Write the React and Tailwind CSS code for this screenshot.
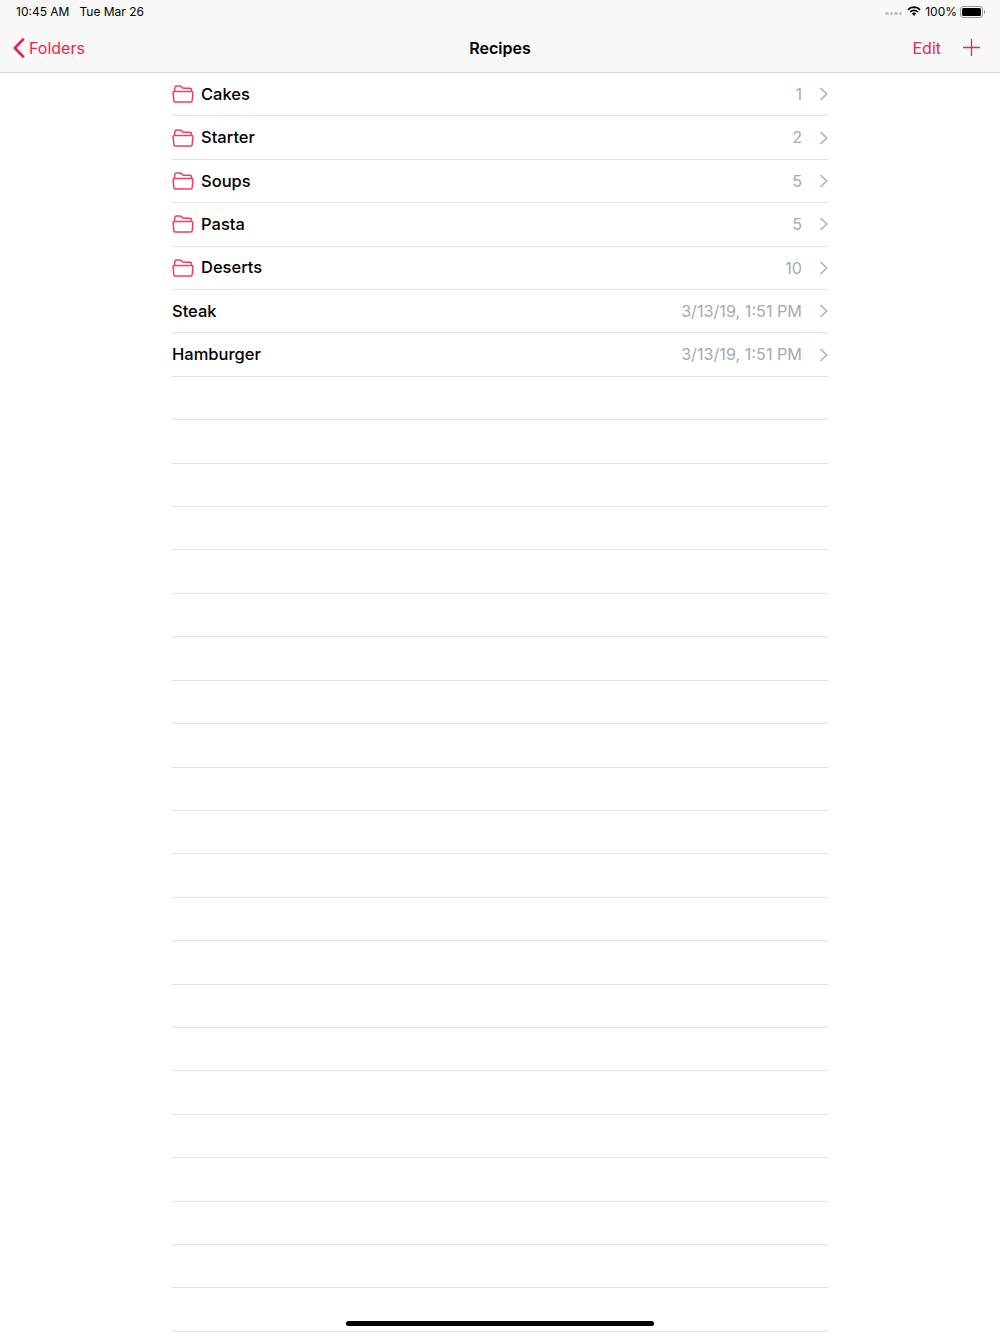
import React from 'react';

const items = [
  { name: 'Cakes', detail: '1', folder: true },
  { name: 'Starter', detail: '2', folder: true },
  { name: 'Soups', detail: '5', folder: true },
  { name: 'Pasta', detail: '5', folder: true },
  { name: 'Deserts', detail: '10', folder: true },
  { name: 'Steak', detail: '3/13/19, 1:51 PM' },
  { name: 'Hamburger', detail: '3/13/19, 1:51 PM' },
];

const emptyRows = Array.from({ length: 22 }, (_, i) => i);

const FolderIcon = () => (
  <svg width="22" height="18" viewBox="0 0 22 18" fill="none" stroke="#ee3f63" strokeWidth="1.5" strokeLinejoin="round" className="shrink-0">
    <path d="M2.500 6.500L2.900 2.400C3 1.500 3.600 1 4.500 1h3.400c.6 0 1 .2 1.400.6l1.200 1.200c.3.3.6.4 1 .4h6.400c1 0 1.600.6 1.600 1.600v1.700" />
    <path d="M1.100 7.900c-.1-.9.5-1.500 1.400-1.500h17c.9 0 1.500.6 1.400 1.500l-.7 7.600c-.1 1-.7 1.500-1.600 1.500H3.400c-.9 0-1.500-.5-1.600-1.500z" />
  </svg>
);

const Chevron = () => (
  <svg width="9" height="14" viewBox="0 0 9 14" fill="none" stroke="#b4b4b9" strokeWidth="1.7" className="shrink-0">
    <path d="M1.500 1l6.200 6-6.200 6" />
  </svg>
);

const StatusBar = () => (
  <div className="flex h-6 items-center justify-between pl-4 pr-[15px] text-[12px] leading-none text-black">
    <div className="flex gap-[10px]">
      <span>10:45 AM</span>
      <span>Tue Mar 26</span>
    </div>
    <div className="flex items-center">
      <div className="mt-[3px] flex gap-[1px]">
        {[0, 1, 2, 3].map((i) => (
          <span key={i} className="h-[3.5px] w-[3.5px] rounded-full bg-[#c4c4c4]" />
        ))}
      </div>
      <svg width="14" height="11" viewBox="0 0 14 11" className="ml-[5px] -mt-[1px]" fill="none" stroke="#000">
        <path d="M.900 3.800A8.700 8.700 0 0 1 7 1.200a8.700 8.700 0 0 1 6.100 2.600" strokeWidth="1.700" />
        <path d="M3.200 6A5.400 5.400 0 0 1 7 4.400 5.400 5.400 0 0 1 10.800 6" strokeWidth="1.700" />
        <path d="M7 6.500c-.9 0-1.600.3-2.100.9L7 10l2.100-2.600c-.5-.6-1.200-.9-2.100-.9z" fill="#000" stroke="none" />
      </svg>
      <span className="ml-[4px]">100%</span>
      <div className="ml-[3px] flex items-center">
        <div className="h-[12px] w-[23px] rounded-[3px] border border-[#9a9a9a] p-[1px]">
          <div className="h-full w-full rounded-[1.5px] bg-black" />
        </div>
        <div className="ml-[1px] h-[4px] w-[1px] rounded-r-sm bg-[#9a9a9a]" />
      </div>
    </div>
  </div>
);

const NavBar = () => (
  <div className="grid h-[48px] grid-cols-[1fr_auto_1fr] items-center text-[16px] text-[#e8264f]">
    <div className="flex items-center pl-[13px]">
      <svg width="12" height="20" viewBox="0 0 12 20" fill="none" stroke="#e8264f" strokeWidth="2.6" strokeLinecap="round" strokeLinejoin="round">
        <path d="M10 1.500L1.800 10 10 18.500" />
      </svg>
      <span className="ml-[4px]">Folders</span>
    </div>
    <span className="font-semibold text-black">Recipes</span>
    <div className="flex items-center justify-end pr-[20px]">
      <span>Edit</span>
      <svg width="17" height="17" viewBox="0 0 17 17" stroke="#e8264f" strokeWidth="1.3" className="ml-[22px] -mt-[1px]">
        <path d="M8.500 0v17M0 8.500h17" />
      </svg>
    </div>
  </div>
);

const App = () => (
  <div className="relative h-[1334px] overflow-hidden bg-white font-['Inter',sans-serif]">
    <div className="h-[73px] border-b border-[#d4d4d6] bg-[#f8f8f8]">
      <StatusBar />
      <NavBar />
    </div>
    <div className="mx-[172px]">
      {items.map((item) => (
        <div key={item.name} className="flex h-[43.41px] items-center border-b border-[#e2e2e4]">
          {item.folder && (
            <span className="mr-[7px] flex">
              <FolderIcon />
            </span>
          )}
          <span className="text-[16.5px] font-medium text-black">{item.name}</span>
          <span className="ml-auto text-[16.2px] text-[#a9a9ae]">{item.detail}</span>
          <span className="ml-[17px] flex">
            <Chevron />
          </span>
        </div>
      ))}
      {emptyRows.map((i) => (
        <div key={i} className="h-[43.41px] border-b border-[#e2e2e4]" />
      ))}
    </div>
    <div className="absolute bottom-[8px] left-[346px] h-[5px] w-[308px] rounded-full bg-black" />
  </div>
);

export default App;
